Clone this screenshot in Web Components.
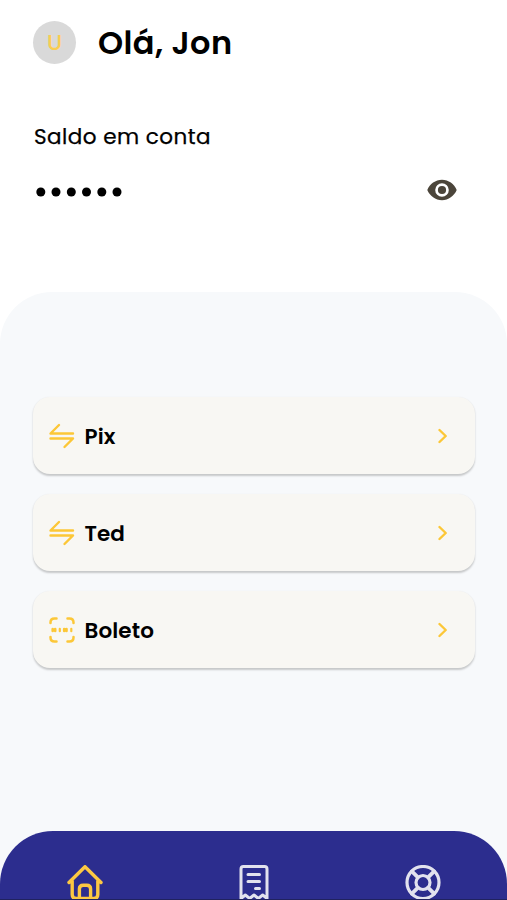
<!DOCTYPE html>
<html lang="pt-BR">
<head>
<meta charset="UTF-8">
<meta name="viewport" content="width=device-width, initial-scale=1">
<title>Conta</title>
<style>
    html, body {
        margin: 0;
        height: 100%;
        overflow: hidden;
        background: #fff;
    }
</style>
</head>
<body>
<bank-home>
    <account-header slot="header" initial="U">Olá, Jon</account-header>
    <account-balance slot="header" label="Saldo em conta"></account-balance>
    <action-card icon="transfer">Pix</action-card>
    <action-card icon="transfer">Ted</action-card>
    <action-card icon="barcode">Boleto</action-card>
    <tab-bar slot="footer">
        <app-icon name="home"></app-icon>
        <app-icon name="receipt"></app-icon>
        <app-icon name="help"></app-icon>
    </tab-bar>
</bank-home>

<script>
const icons = {
    transfer: `
        <svg width="26" height="26" viewBox="0 0 26 26" fill="none" stroke="currentColor" stroke-width="2.4" stroke-linecap="round" stroke-linejoin="round">
            <path d="M24 10.5H1.500L10 2M1.500 15.500H24L15.500 24"/>
        </svg>`,
    barcode: `
        <svg width="26" height="26" viewBox="0 0 26 26" fill="none" stroke="currentColor" stroke-width="2.5" stroke-linecap="round" stroke-linejoin="round">
            <path d="M1.5 6V5.5Q1.5 1.500 5.5 1.500H7.5M18.5 1.500H20.500Q24.5 1.500 24.5 5.500V6M24.5 20V20.500Q24.5 24.500 20.500 24.500H18.5M7.5 24.500H5.500Q1.5 24.500 1.500 20.500V20"/>
            <path d="M3.700 12V14M6.200 12V14M15.200 12V14M17.500 12V14" stroke-width="2.600"/>
            <path d="M10.800 11.800V14.200M22.300 11.800V14.200" stroke-width="2.200"/>
        </svg>`,
    chevron: `
        <svg width="10" height="16" viewBox="0 0 10 16" fill="none" stroke="currentColor" stroke-width="2.4" stroke-linecap="round" stroke-linejoin="round">
            <path d="M1.500 2L7.700 8L1.500 14"/>
        </svg>`,
    eye: `
        <svg width="30" height="22" viewBox="0 0 30 22">
            <path fill="currentColor" fill-rule="evenodd" d="M15 .8C8.500 .8 2.800 5 .3 11C2.800 17 8.500 21.200 15 21.200S27.200 17 29.700 11C27.200 5 21.500 .8 15 .8ZM15 17.800A6.800 6.800 0 1 1 15 4.200A6.800 6.800 0 0 1 15 17.800Z"/>
            <circle cx="15" cy="11" r="4.100" fill="currentColor"/>
        </svg>`,
    home: `
        <svg width="36" height="36" viewBox="0 0 36 36" fill="none" stroke="currentColor" stroke-width="3.400" stroke-linecap="round" stroke-linejoin="round">
            <path d="M2 17.500L18 1.700L34 17.500M5.200 16V29.500Q5.200 33.500 9.200 33.500H26.800Q30.800 33.500 30.800 29.500V16"/>
            <path d="M12.400 33.500V24Q12.400 20.200 16.200 20.200H19.800Q23.600 20.200 23.600 24V33.500"/>
        </svg>`,
    receipt: `
        <svg width="30" height="36" viewBox="0 0 30 36" fill="none" stroke="currentColor" stroke-width="3" stroke-linecap="round" stroke-linejoin="round">
            <path d="M2 33.500V4Q2 1.600 4.400 1.600H25.600Q28 1.600 28 4V33.500L23.700 30L19.300 33.500L15 30L10.700 33.500L6.300 30Z"/>
            <path d="M9 9.500H20.500M9 16.500H20.500M16.500 23.500H20.500"/>
        </svg>`,
    help: `
        <svg width="36" height="36" viewBox="0 0 36 36" fill="none" stroke="currentColor" stroke-width="3.200" stroke-linecap="round">
            <circle cx="18" cy="17.500" r="16"/>
            <circle cx="18" cy="17.500" r="7"/>
            <path d="M6.900 6.400L12.700 12.200M29.100 6.400L23.300 12.200M6.900 28.600L12.700 22.800M29.100 28.600L23.300 22.800" stroke-width="3.800"/>
        </svg>`
};

class AppIcon extends HTMLElement {
    constructor() {
        super();
        this.attachShadow({ mode: 'open' });
    }

    connectedCallback() {
        this.shadowRoot.innerHTML = `
            <style>
                :host { display: inline-flex; flex: none; }
                svg { display: block; }
            </style>
            ${icons[this.getAttribute('name')]}
        `;
    }
}
customElements.define('app-icon', AppIcon);

class BankHome extends HTMLElement {
    constructor() {
        super();
        this.attachShadow({ mode: 'open' });
        this.shadowRoot.innerHTML = `
            <style>
                :host {
                    display: flex;
                    flex-direction: column;
                    height: 900px;
                    background: #fff;
                    color: #000;
                    font-family: Poppins, Inter, sans-serif;
                }
                header {
                    flex: none;
                    box-sizing: border-box;
                    height: 292px;
                    padding: 20px 33px 0;
                }
                main {
                    flex: 1;
                    display: flex;
                    flex-direction: column;
                    background: #f7f9fb;
                    border-radius: 52px 52px 0 0;
                }
                .actions {
                    display: grid;
                    gap: 20px;
                    padding: 105px 32px 0 33px;
                }
                footer { margin-top: auto; }
            </style>
            <header><slot name="header"></slot></header>
            <main>
                <div class="actions"><slot></slot></div>
                <footer><slot name="footer"></slot></footer>
            </main>
        `;
    }
}
customElements.define('bank-home', BankHome);

class AccountHeader extends HTMLElement {
    constructor() {
        super();
        this.attachShadow({ mode: 'open' });
        this.shadowRoot.innerHTML = `
            <style>
                :host {
                    display: flex;
                    align-items: center;
                    gap: 22px;
                    height: 44px;
                }
                .avatar {
                    display: grid;
                    place-items: center;
                    width: 43px;
                    height: 43px;
                    border-radius: 50%;
                    background: #d9d9d9;
                    color: #f9cd52;
                    font-size: 22px;
                    font-weight: 500;
                }
                h1 {
                    margin: 0;
                    padding-top: 2px;
                    font-size: 32px;
                    font-weight: 600;
                    line-height: 44px;
                    letter-spacing: 0.400px;
                }
            </style>
            <div class="avatar"></div>
            <h1><slot></slot></h1>
        `;
    }

    connectedCallback() {
        this.shadowRoot.querySelector('.avatar').textContent = this.getAttribute('initial');
    }
}
customElements.define('account-header', AccountHeader);

class AccountBalance extends HTMLElement {
    constructor() {
        super();
        this.attachShadow({ mode: 'open' });
        this.shadowRoot.innerHTML = `
            <style>
                :host {
                    display: block;
                    padding-top: 57px;
                }
                .label {
                    padding-left: 1px;
                    font-size: 21.500px;
                    line-height: 32px;
                    letter-spacing: 0.450px;
                    -webkit-text-stroke: 0.250px currentColor;
                }
                .row {
                    display: flex;
                    align-items: center;
                    justify-content: space-between;
                    height: 30px;
                    margin-top: 21px;
                    padding: 1px 17px 0 3px;
                }
                .dots {
                    display: block;
                    height: 10px;
                    margin-top: 3px;
                }
                circle { fill: #000; }
                app-icon { color: #4b453a; }
            </style>
            <div class="label"></div>
            <div class="row">
                <svg class="dots" width="88" height="10">
                    <circle cx="4.800" cy="5" r="4.500"/>
                    <circle cx="20" cy="5" r="4.500"/>
                    <circle cx="35.300" cy="5" r="4.500"/>
                    <circle cx="50.500" cy="5" r="4.500"/>
                    <circle cx="65.800" cy="5" r="4.500"/>
                    <circle cx="81" cy="5" r="4.500"/>
                </svg>
                <app-icon name="eye"></app-icon>
            </div>
        `;
    }

    connectedCallback() {
        this.shadowRoot.querySelector('.label').textContent = this.getAttribute('label');
    }
}
customElements.define('account-balance', AccountBalance);

class ActionCard extends HTMLElement {
    constructor() {
        super();
        this.attachShadow({ mode: 'open' });
    }

    connectedCallback() {
        this.shadowRoot.innerHTML = `
            <style>
                :host {
                    display: flex;
                    align-items: center;
                    box-sizing: border-box;
                    height: 77px;
                    padding: 1px 27px 0 16px;
                    border-radius: 17px;
                    background: #f8f7f3;
                    box-shadow: 0 1.500px 2px rgba(0, 0, 0, 0.2);
                }
                .text {
                    flex: 1;
                    margin-left: 9.500px;
                    font-size: 21.500px;
                    font-weight: 600;
                    letter-spacing: 0.100px;
                }
                app-icon { color: #fcc737; }
            </style>
            <app-icon name="${this.getAttribute('icon')}"></app-icon>
            <span class="text"><slot></slot></span>
            <app-icon name="chevron"></app-icon>
        `;
    }
}
customElements.define('action-card', ActionCard);

class TabBar extends HTMLElement {
    constructor() {
        super();
        this.attachShadow({ mode: 'open' });
        this.shadowRoot.innerHTML = `
            <style>
                :host {
                    display: grid;
                    grid-template-columns: repeat(3, 1fr);
                    justify-items: center;
                    box-sizing: border-box;
                    height: 69px;
                    padding-top: 34px;
                    overflow: hidden;
                    border-radius: 53px 53px 0 0;
                    border-bottom: 1px solid #20225f;
                    background: #2c2d8e;
                    color: #e2e2ee;
                }
                ::slotted([name="home"]) { color: #fcc842; }
            </style>
            <slot></slot>
        `;
    }
}
customElements.define('tab-bar', TabBar);
</script>
</body>
</html>
